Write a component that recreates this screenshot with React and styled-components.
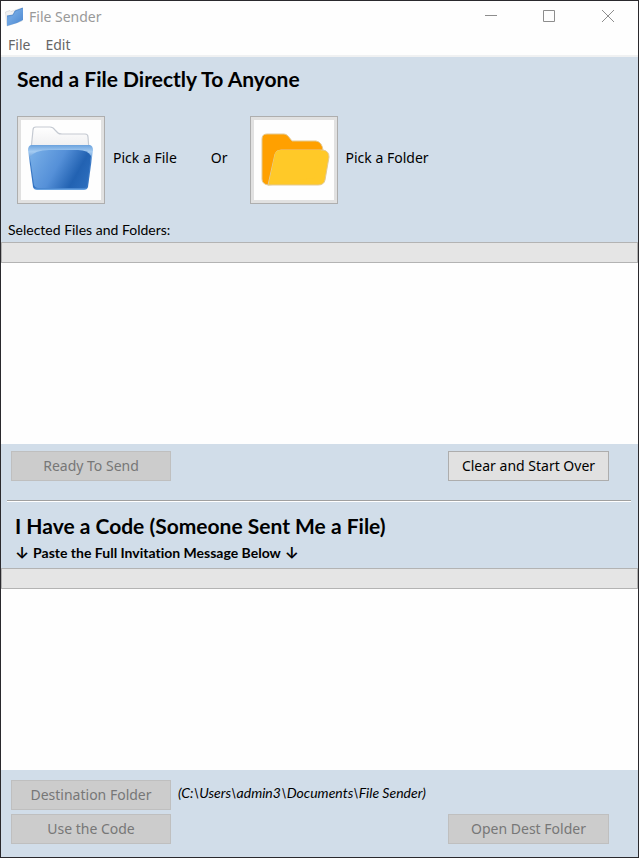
import React from "react";
import styled, { createGlobalStyle } from "styled-components";

const GlobalStyle = createGlobalStyle`
  * { box-sizing: border-box; }
  body { margin: 0; }
`;

const ui = `"Noto Sans", "Open Sans", sans-serif`;
const humanist = `Lato, "Open Sans", sans-serif`;

const Window = styled.div`
  display: flex;
  flex-direction: column;
  min-height: 100vh;
  border: 1px solid #2a292d;
  background: #d1dde9;
  color: #000;
  font-family: ${ui};
  font-size: 14px;
  font-variant-ligatures: none;
`;

const TitleBar = styled.header`
  display: flex;
  align-items: center;
  height: 31px;
  padding: 0 2px 0 4px;
  background: #fefefe;
  color: #999;
`;

const AppTitle = styled.h1`
  flex: 1;
  margin: 0 0 0 5px;
  font-size: 14px;
  font-weight: 400;
  line-height: 20px;
`;

const CaptionButton = styled.button`
  display: grid;
  place-items: center;
  width: 58px;
  height: 30px;
  padding: 0;
  border: 0;
  background: transparent;
  color: #8d8d8d;
`;

const MenuBar = styled.nav`
  display: flex;
  gap: 15px;
  height: 25px;
  padding-left: 7px;
  border-bottom: 2px solid #f0f1f2;
  background: #fefefe;
`;

const MenuItem = styled.button`
  padding: 2px 0 0;
  border: 0;
  background: transparent;
  color: #666;
  font: 14px/20px ${ui};
`;

const Section = styled.section`
  display: flex;
  flex: 1 1 auto;
  flex-direction: column;
`;

const Heading = styled.h2`
  margin: 0;
  padding: ${(p) => p.$pad};
  font: 700 21px/24px ${humanist};
  font-variant-ligatures: none;
`;

const PickRow = styled.div`
  display: flex;
  align-items: center;
  padding: 25px 16px 16px;
`;

const PickLabel = styled.label`
  margin: 0 ${(p) => (p.$last ? 0 : 34)}px 4px 8px;
  line-height: 20px;
`;

const Or = styled.span`
  margin: 0 22px 4px 0;
  line-height: 20px;
`;

const PickButton = styled.button`
  display: block;
  width: 88px;
  height: 88px;
  padding: 3px;
  border: 1px solid #aeaeae;
  background: #e1e1e1;

  svg {
    display: block;
    background: #fefefe;
  }
`;

const ListLabel = styled.div`
  padding: 0 7px 2px;
  font: 14px/20px ${humanist};
`;

const PasteLabel = styled.label`
  display: flex;
  align-items: center;
  gap: 4px;
  padding: 5px 14px;
  font: 700 14px/20px ${humanist};
  font-variant-ligatures: none;
`;

const Arrow = styled.span`
  font: 600 16px/20px Inter, sans-serif;
`;

const Strip = styled.div`
  height: 21px;
  border: 1px solid #b3b3b3;
  background: #e5e5e5;
`;

const FileList = styled.div`
  flex: 1;
  min-height: 120px;
  background: #fefefe;
`;

const Message = styled.textarea`
  display: block;
  flex: 1;
  width: 100%;
  min-height: 120px;
  padding: 4px;
  border: 0;
  outline: 0;
  resize: none;
  background: #fefefe;
  font: 14px/20px ${ui};
`;

const Actions = styled.div`
  display: flex;
  justify-content: space-between;
  padding: ${(p) => p.$pad};
`;

const ActionButton = styled.button`
  width: ${(p) => (p.$wide ? 161 : 160)}px;
  height: 30px;
  padding: 0;
  border: 1px solid #adadad;
  background: #e1e1e1;
  color: #000;
  font: 14px/20px ${ui};

  &:disabled {
    border-color: #bfbfbf;
    background: #ccc;
    color: #777;
  }
`;

const Divider = styled.hr`
  width: auto;
  height: 2px;
  margin: 0 7px 0 6px;
  border: 0;
  border-top: 1px solid #a0a0a0;
  background: #fff;
`;

const Destination = styled.output`
  flex: 1;
  padding: 3px 0 0 7px;
  font: italic 14px/20px ${humanist};
`;

function AppIcon() {
  return (
    <svg width="19" height="20" viewBox="0 0 19 20" aria-hidden="true">
      <defs>
        <linearGradient id="app" x1="0" y1="0" x2="1" y2="1">
          <stop offset="0" stopColor="#5b94d6" />
          <stop offset=".4" stopColor="#6ea5e2" />
          <stop offset="1" stopColor="#4a86cf" />
        </linearGradient>
      </defs>
      <path d="M.5 5L5 3.500L6 4.500L17 1V14L2 19Z" fill="#f1f2f3" stroke="#cfd2d5" strokeWidth=".6" />
      <path d="M2 9L8 8L10 4L18 1V13L12 16L2 19Z" fill="url(#app)" />
      <path d="M2 9L8 8L10 4L18 1" fill="none" stroke="#4580c5" strokeWidth=".8" />
    </svg>
  );
}

function FileIcon() {
  return (
    <svg width="80" height="80" viewBox="0 0 80 80" aria-hidden="true">
      <defs>
        <linearGradient id="paper" x1="0" y1="0" x2="0" y2="1">
          <stop offset="0" stopColor="#fff" />
          <stop offset="1" stopColor="#ececee" />
        </linearGradient>
        <linearGradient id="rim" x1="0" y1="0" x2="0" y2="1">
          <stop offset="0" stopColor="#6ba2dd" />
          <stop offset=".15" stopColor="#a5ccf2" />
          <stop offset=".4" stopColor="#3b79c5" />
          <stop offset=".95" stopColor="#3474c2" />
          <stop offset="1" stopColor="#78b0ea" />
        </linearGradient>
        <linearGradient id="blue" x1="0" y1=".25" x2="1" y2=".6">
          <stop offset="0" stopColor="#75ace6" />
          <stop offset=".45" stopColor="#5590d8" />
          <stop offset=".8" stopColor="#2262b2" />
          <stop offset="1" stopColor="#2a6bbb" />
        </linearGradient>
      </defs>
      <path d="M10 30L12 10Q12 7 15 7H29Q32 7 34 10L37 13Q38 14 41 14H64Q67 14 67 17L68 30Z" fill="url(#paper)" stroke="#c5cad2" strokeWidth="1.2" />
      <path d="M10 25H69Q72 26 72 30L67 67Q66 70 63 70H16Q13 70 12 67L7 30Q7 26 10 25Z" fill="url(#rim)" />
      <path d="M9 37Q14 30 28 30H57Q67 30 70 36L66 65Q65 68 62 68H17Q14 68 13 65Z" fill="url(#blue)" />
    </svg>
  );
}

function FolderIcon() {
  return (
    <svg width="80" height="80" viewBox="0 0 80 80" aria-hidden="true">
      <g stroke="#e3c992" strokeWidth="1">
        <path d="M8 19Q8 14 13 14H30Q32 14 34 16L38 21H62Q68 22 69 30L60 60L14 65Q8 64 8 59Z" fill="#ffa000" />
        <path d="M21 34Q22 30 27 30H69Q75 31 75 37L71 60Q70 65 64 65H14Z" fill="#ffc928" />
      </g>
      <path d="M21 34Q22 30 27 30H67L60 58L15 64Z" fill="#ffc928" />
    </svg>
  );
}

function CaptionIcon({ d }) {
  return (
    <svg width="13" height="13" viewBox="0 0 13 13" fill="none" stroke="currentColor" aria-hidden="true">
      <path d={d} />
    </svg>
  );
}

export default function App() {
  return (
    <>
      <GlobalStyle />
      <Window>
        <TitleBar>
          <AppIcon />
          <AppTitle>File Sender</AppTitle>
          <CaptionButton aria-label="Minimize"><CaptionIcon d="M0 5.500H12" /></CaptionButton>
          <CaptionButton aria-label="Maximize"><CaptionIcon d="M.5 .5H11.500V11.500H.5Z" /></CaptionButton>
          <CaptionButton aria-label="Close"><CaptionIcon d="M1 0L13 12M13 0L1 12" /></CaptionButton>
        </TitleBar>
        <MenuBar>
          <MenuItem>File</MenuItem>
          <MenuItem>Edit</MenuItem>
        </MenuBar>

        <Section>
          <Heading $pad="10px 16px 0">Send a File Directly To Anyone</Heading>
          <PickRow>
            <PickButton id="pick-file"><FileIcon /></PickButton>
            <PickLabel htmlFor="pick-file">Pick a File</PickLabel>
            <Or>Or</Or>
            <PickButton id="pick-folder"><FolderIcon /></PickButton>
            <PickLabel htmlFor="pick-folder" $last>Pick a Folder</PickLabel>
          </PickRow>
          <ListLabel id="selected">Selected Files and Folders:</ListLabel>
          <Strip />
          <FileList role="list" aria-labelledby="selected" />
          <Actions $pad="7px 29px 19px 10px">
            <ActionButton disabled>Ready To Send</ActionButton>
            <ActionButton $wide>Clear and Start Over</ActionButton>
          </Actions>
        </Section>

        <Divider />

        <Section>
          <Heading $pad="12px 14px 0">I Have a Code (Someone Sent Me a File)</Heading>
          <PasteLabel htmlFor="message">
            <Arrow>↓</Arrow>Paste the Full Invitation Message Below<Arrow>↓</Arrow>
          </PasteLabel>
          <Strip />
          <Message id="message" />
          <Actions $pad="10px 29px 4px 10px">
            <ActionButton disabled>Destination Folder</ActionButton>
            <Destination>(C:\Users\admin3\Documents\File Sender)</Destination>
          </Actions>
          <Actions $pad="0 29px 13px 10px">
            <ActionButton disabled>Use the Code</ActionButton>
            <ActionButton $wide disabled>Open Dest Folder</ActionButton>
          </Actions>
        </Section>
      </Window>
    </>
  );
}
